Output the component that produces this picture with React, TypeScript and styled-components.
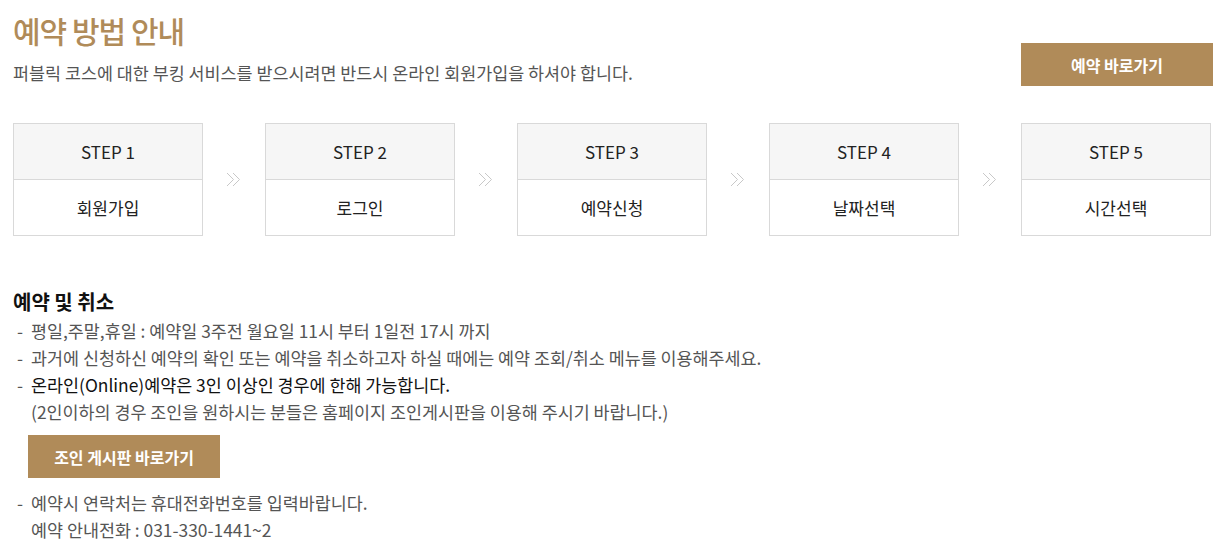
import React from "react";
import styled, { createGlobalStyle } from "styled-components";

const GOLD = "#b08b59";

const GlobalStyle = createGlobalStyle`
  body {
    margin: 0;
    background: #fff;
    font-family: "Noto Sans CJK KR", "Noto Sans", sans-serif;
    color: #555;
  }
`;

const Page = styled.div`
  padding: 10px 12px 0 13px;
`;

const Header = styled.div`
  display: flex;
  justify-content: space-between;
  align-items: flex-start;
`;

const Title = styled.h1`
  margin: 0;
  font-size: 30px;
  line-height: 40px;
  font-weight: 500;
  letter-spacing: -1px;
  color: ${GOLD};
`;

const Lead = styled.p`
  margin: 11px 0 0;
  font-size: 17.4px;
  line-height: 24px;
  color: #555;
`;

const GoldButton = styled.button<{ $width: number }>`
  width: ${(p) => p.$width}px;
  height: 43px;
  border: 0;
  padding: 0;
  background: ${GOLD};
  color: #fff;
  font-family: inherit;
  font-size: 16px;
  font-weight: 700;
  cursor: pointer;
`;

const TopButton = styled(GoldButton)`
  margin: 33px -2px 0 0;
`;

const Steps = styled.div`
  display: flex;
  margin-top: 37px;
`;

const StepBox = styled.div`
  flex: 0 0 190px;
  border: 1px solid #d9d9d9;
  box-sizing: border-box;
  display: grid;
  grid-template-rows: 56px 55px;
  text-align: center;
`;

const StepHead = styled.div`
  background: #f6f6f6;
  border-bottom: 1px solid #d9d9d9;
  display: flex;
  align-items: center;
  justify-content: center;
  font-size: 17px;
  color: #222;
`;

const StepBody = styled.div`
  display: flex;
  align-items: center;
  justify-content: center;
  font-size: 17px;
  color: #222;
`;

const Arrow = styled.div`
  flex: 1 1 auto;
  display: flex;
  align-items: center;
  justify-content: center;
`;

const Section = styled.section`
  margin-top: 51px;
`;

const SectionTitle = styled.h2`
  margin: 0;
  font-size: 20px;
  line-height: 30px;
  font-weight: 700;
  color: #111;
`;

const List = styled.ul`
  list-style: none;
  margin: 0;
  padding: 0;
`;

const Item = styled.li<{ $strong?: boolean }>`
  position: relative;
  padding-left: 18px;
  font-size: 17.4px;
  line-height: 27px;
  color: ${(p) => (p.$strong ? "#111" : "#555")};

  &::before {
    content: "-";
    position: absolute;
    left: 4px;
    top: 0;
    color: #555;
  }
`;

const Note = styled.span`
  display: block;
  color: #555;
`;

const BoardButton = styled(GoldButton)`
  display: block;
  margin: 10px 0 11px 15px;
`;

const Chevrons = () => (
  <svg width="16" height="15" viewBox="0 0 16 15" fill="none" stroke="#c8c8c8" strokeWidth="1">
    <path d="M1 1l6.5 6.5L1 14" />
    <path d="M7 1l6.5 6.5L7 14" />
  </svg>
);

const steps = ["회원가입", "로그인", "예약신청", "날짜선택", "시간선택"];

export default function App() {
  return (
    <>
      <GlobalStyle />
      <Page>
        <Header>
          <div>
            <Title>예약 방법 안내</Title>
            <Lead>퍼블릭 코스에 대한 부킹 서비스를 받으시려면 반드시 온라인 회원가입을 하셔야 합니다.</Lead>
          </div>
          <TopButton $width={192}>예약 바로가기</TopButton>
        </Header>

        <Steps>
          {steps.map((label, i) => (
            <React.Fragment key={label}>
              {i > 0 && (
                <Arrow>
                  <Chevrons />
                </Arrow>
              )}
              <StepBox>
                <StepHead>STEP {i + 1}</StepHead>
                <StepBody>{label}</StepBody>
              </StepBox>
            </React.Fragment>
          ))}
        </Steps>

        <Section>
          <SectionTitle>예약 및 취소</SectionTitle>
          <List>
            <Item>평일,주말,휴일 : 예약일 3주전 월요일 11시 부터 1일전 17시 까지</Item>
            <Item>과거에 신청하신 예약의 확인 또는 예약을 취소하고자 하실 때에는 예약 조회/취소 메뉴를 이용해주세요.</Item>
            <Item $strong>
              온라인(Online)예약은 3인 이상인 경우에 한해 가능합니다.
              <Note>(2인이하의 경우 조인을 원하시는 분들은 홈페이지 조인게시판을 이용해 주시기 바랍니다.)</Note>
            </Item>
          </List>
          <BoardButton $width={192}>조인 게시판 바로가기</BoardButton>
          <List>
            <Item>
              예약시 연락처는 휴대전화번호를 입력바랍니다.
              <Note>예약 안내전화 : 031-330-1441~2</Note>
            </Item>
          </List>
        </Section>
      </Page>
    </>
  );
}
